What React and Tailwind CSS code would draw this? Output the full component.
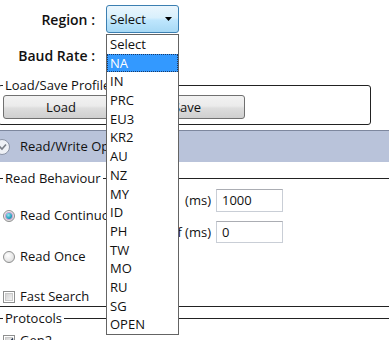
import React from "react";

function Radio({ checked }) {
  return (
    <span className="relative inline-flex w-[12px] h-[12px] rounded-full border border-[#8e8f8f] bg-[radial-gradient(circle_at_40%_35%,#ffffff_0%,#e6e6e6_60%,#cfcfcf_100%)] items-center justify-center shrink-0">
      {checked && (
        <span className="w-[6px] h-[6px] rounded-full bg-[radial-gradient(circle_at_40%_35%,#9ee6f0_0%,#2aa3c0_55%,#0f6f8f_100%)] ring-1 ring-[#c8a0d0]" />
      )}
    </span>
  );
}

function Check({ checked }) {
  return (
    <span className="relative inline-flex w-[12px] h-[12px] border border-[#8e8f8f] bg-white items-center justify-center shrink-0">
      <span className="w-[8px] h-[8px] bg-[linear-gradient(135deg,#d4d4d4_0%,#f2f2f2_100%)] border border-[#c9c9c9]" />
      {checked && (
        <svg className="absolute left-[1px] top-[1px]" width="9" height="9" viewBox="0 0 9 9">
          <path d="M1 4.5 L3.5 7 L8 1.5" stroke="#26364f" strokeWidth="1.6" fill="none" />
        </svg>
      )}
    </span>
  );
}

export default function App() {
  const items = ["Select", "NA", "IN", "PRC", "EU3", "KR2", "AU", "NZ", "MY", "ID", "PH", "TW", "MO", "RU", "SG", "OPEN"];
  return (
    <div className="relative w-[389px] h-[340px] overflow-hidden bg-white text-[13px] leading-[19px] text-[#111] font-['Open_Sans','Noto_Sans',sans-serif]">
      {/* Region row */}
      <div className="flex items-center h-[28px] mt-[5px]">
        <div className="w-[95px] text-right font-semibold text-[14px]">Region :</div>
        <div className="ml-[11px] w-[73px] h-[28px] rounded-[3px] border border-[#3c7fb1] bg-[linear-gradient(to_bottom,#eaf6fd_0%,#d9f0fc_45%,#bee6fd_55%,#a7d9f5_100%)] flex items-center justify-between pl-[3px] pr-[6px]">
          <span>Select</span>
          <svg width="7" height="4" viewBox="0 0 7 4">
            <path d="M0 0 H7 L3.5 4 Z" fill="#000" />
          </svg>
        </div>
      </div>

      {/* Baud rate row */}
      <div className="flex items-center h-[28px] mt-[8px]">
        <div className="w-[95px] text-right font-semibold text-[14px]">Baud Rate :</div>
        <div className="ml-[11px] w-[73px] h-[28px] rounded-[3px] border border-[#707070] bg-[linear-gradient(to_bottom,#f2f2f2,#dcdcdc)]" />
      </div>

      {/* Load/Save Profile */}
      <fieldset className="mt-[7px] -ml-[2px] w-[373px] border border-[#222] rounded-[3px] pb-[5px]">
        <legend className="ml-[4px] px-[2px]">Load/Save Profile</legend>
        <div className="flex gap-[10px] ml-[4px]">
          <button className="w-[116px] h-[24px] rounded-[3px] border border-[#707070] bg-[linear-gradient(to_bottom,#f2f2f2_0%,#ebebeb_45%,#dddddd_55%,#cfcfcf_100%)]">Load</button>
          <button className="w-[116px] h-[24px] rounded-[3px] border border-[#707070] bg-[linear-gradient(to_bottom,#f2f2f2_0%,#ebebeb_45%,#dddddd_55%,#cfcfcf_100%)]">Save</button>
        </div>
      </fieldset>

      {/* Expander header */}
      <div className="mt-[5px] h-[32px] border-t border-[#7d879e] bg-[#b9c3da] flex items-center">
        <svg width="16" height="18" viewBox="0 0 16 18" className="shrink-0">
          <circle cx="2" cy="9" r="7.5" fill="#eef1f6" stroke="#8a93a6" strokeWidth="1" />
          <path d="M-2 7 L2 11 L6 6.5" stroke="#7a7f88" strokeWidth="1.6" fill="none" />
        </svg>
        <span className="ml-[4px] whitespace-nowrap">Read/Write Operations</span>
      </div>

      {/* Read Behaviour */}
      <fieldset className="mt-[7px] -ml-[2px] w-[400px] border border-[#222]">
        <legend className="ml-[4px] px-[2px]">Read Behaviour</legend>
        <div className="h-[118px] flex">
          <div className="w-[150px] shrink-0 flex flex-col pl-[4px] pt-[18px]">
            <label className="flex items-center gap-[5px] h-[19px] whitespace-nowrap">
              <Radio checked />
              <span>Read Continuously</span>
            </label>
            <label className="flex items-center gap-[5px] h-[19px] mt-[22px] whitespace-nowrap">
              <Radio />
              <span>Read Once</span>
            </label>
            <label className="flex items-center gap-[5px] h-[19px] mt-[21px] whitespace-nowrap">
              <Check />
              <span>Fast Search</span>
            </label>
          </div>
          <div className="w-[134px] shrink-0 flex flex-col pt-[1px] gap-[9px]">
            <div className="flex items-center justify-end gap-[5px] whitespace-nowrap">
              <span>Interval&nbsp;&nbsp;(ms)</span>
              <div className="w-[67px] h-[23px] shrink-0 border border-[#c9ced6] border-t-[#abadb3] flex items-center pl-[5px]">1000</div>
            </div>
            <div className="flex items-center justify-end gap-[5px] whitespace-nowrap">
              <span>Time Off (ms)</span>
              <div className="w-[67px] h-[22px] shrink-0 border border-[#c9ced6] border-t-[#abadb3] flex items-center pl-[5px]">0</div>
            </div>
          </div>
        </div>
      </fieldset>

      {/* Protocols */}
      <fieldset className="mt-[2px] -ml-[2px] w-[400px] border border-[#222]">
        <legend className="ml-[4px] px-[2px]">Protocols</legend>
        <div className="pl-[4px] pt-[3px]">
          <label className="flex items-center gap-[5px] h-[19px]">
            <Check checked />
            <span>Gen2</span>
          </label>
        </div>
      </fieldset>

      {/* Dropdown popup */}
      <div className="absolute left-[106px] top-[34px] w-[73px] border border-[#646464] bg-white">
        {items.map((it) => (
          <div
            key={it}
            className={
              it === "NA"
                ? "h-[18.7px] leading-[17px] pl-[2px] bg-[#3399ff] text-white border border-dotted border-[#1b3a66]"
                : "h-[18.7px] leading-[18.7px] pl-[3px]"
            }
          >
            {it}
          </div>
        ))}
      </div>
    </div>
  );
}
